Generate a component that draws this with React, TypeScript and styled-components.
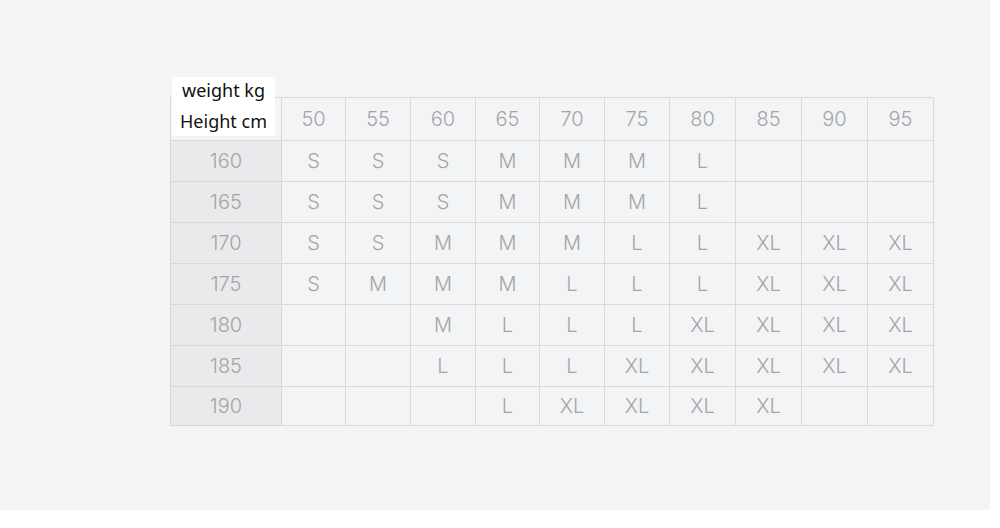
import React from "react";
import styled, { createGlobalStyle } from "styled-components";

const Global = createGlobalStyle`
  html, body { margin: 0; padding: 0; background: #ffffff; }
  * { box-sizing: border-box; }
`;

const Page = styled.div`
  width: 990px;
  height: 510px;
  background: #f3f4f6;
  padding: 97px 0 0 170px;
`;

const Wrap = styled.div`
  position: relative;
  width: 763px;
`;

const Grid = styled.div`
  display: grid;
  grid-template-columns: 111px 64px 65px 65px 64px 65px 65px 66px 66px 66px 66px;
  grid-template-rows: 43px repeat(6, 41px) 39px;
  border-top: 1px solid #d9d9dc;
  border-left: 1px solid #d9d9dc;
`;

const Cell = styled.div<{ $head?: boolean }>`
  display: flex;
  align-items: center;
  justify-content: center;
  border-right: 1px solid #d9d9dc;
  border-bottom: 1px solid #d9d9dc;
  background: ${(p) => (p.$head ? "#eaeaec" : "#f3f4f6")};
  color: #a4a4a7;
  font-family: Inter, "Liberation Sans", Arial, sans-serif;
  font-size: 20px;
  font-weight: 300;
`;

const Label = styled.div`
  position: absolute;
  left: 2px;
  top: -20px;
  width: 103px;
  height: 59px;
  background: #ffffff;
  overflow: hidden;
`;

const Lines = styled.div`
  margin-top: -2px;
  display: flex;
  flex-direction: column;
  align-items: center;
  font-family: "Noto Sans", "Liberation Sans", sans-serif;
  font-size: 18px;
  color: #111111;
  line-height: 31px;
`;

const weights = [50, 55, 60, 65, 70, 75, 80, 85, 90, 95];
const rows: [number, string[]][] = [
  [160, ["S", "S", "S", "M", "M", "M", "L", "", "", ""]],
  [165, ["S", "S", "S", "M", "M", "M", "L", "", "", ""]],
  [170, ["S", "S", "M", "M", "M", "L", "L", "XL", "XL", "XL"]],
  [175, ["S", "M", "M", "M", "L", "L", "L", "XL", "XL", "XL"]],
  [180, ["", "", "M", "L", "L", "L", "XL", "XL", "XL", "XL"]],
  [185, ["", "", "L", "L", "L", "XL", "XL", "XL", "XL", "XL"]],
  [190, ["", "", "", "L", "XL", "XL", "XL", "XL", "", ""]],
];

export default function App() {
  return (
    <>
      <Global />
      <Page>
        <Wrap>
          <Grid>
            <Cell />
            {weights.map((w) => (
              <Cell key={w}>{w}</Cell>
            ))}
            {rows.map(([h, sizes]) => (
              <React.Fragment key={h}>
                <Cell $head>{h}</Cell>
                {sizes.map((s, i) => (
                  <Cell key={i}>{s}</Cell>
                ))}
              </React.Fragment>
            ))}
          </Grid>
          <Label>
            <Lines>
              <span>weight kg</span>
              <span>Height cm</span>
            </Lines>
          </Label>
        </Wrap>
      </Page>
    </>
  );
}
